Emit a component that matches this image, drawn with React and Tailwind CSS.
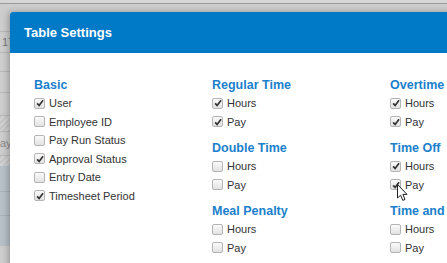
const groups = [
  [{ title: "Basic", items: [["User", true], ["Employee ID", false], ["Pay Run Status", false], ["Approval Status", true], ["Entry Date", false], ["Timesheet Period", true]] }],
  [
    { title: "Regular Time", items: [["Hours", true], ["Pay", true]] },
    { title: "Double Time", items: [["Hours", false], ["Pay", false]] },
    { title: "Meal Penalty", items: [["Hours", false], ["Pay", false]] },
  ],
  [
    { title: "Overtime", items: [["Hours", true], ["Pay", true]] },
    { title: "Time Off", items: [["Hours", true], ["Pay", true]] },
    { title: "Time and a Half", items: [["Hours", false], ["Pay", false]] },
  ],
];

const Box = ({ checked }) => (
  <span className="flex h-[11px] w-[11px] shrink-0 items-center justify-center rounded-[2px] border border-[#b4b4b4] bg-gradient-to-b from-[#fafafa] to-[#e2e2e2]">
    {checked ? (
      <svg className="h-[8px] w-[8px]" viewBox="0 0 10 10">
        <path d="M1.4 5.4 L3.9 8 L8.8 1.6" fill="none" stroke="#333" strokeWidth="2.1" />
      </svg>
    ) : null}
  </span>
);

export default function App() {
  return (
    <div className="relative h-[263px] w-[447px] overflow-hidden bg-[#cdcdcd] font-['Liberation_Sans',Arial,sans-serif]">
      <div className="flex flex-col">
        <div className="h-[4px] border-b border-[#9a9a9a] bg-[#d6d6d6]" />
        <div className="h-[28px] border-b border-[#b8b8b8]" />
        <div className="flex h-[21px] items-center border-b border-[#b8b8b8] pl-[2px] text-[11px] text-[#777]">17</div>
        <div className="h-[19px] border-b border-[#b8b8b8]" />
        <div className="h-[21px] border-b border-[#b8b8b8]" />
        <div className="h-[23px] border-b border-[#b8b8b8]" />
        <div className="h-[16px] border-b border-[#b8b8b8] bg-[repeating-linear-gradient(135deg,#c6c6c6_0_2px,#d2d2d2_2px_4px)]" />
        <div className="flex h-[24px] items-center border-b border-[#b8b8b8] text-[11px] text-[#888]">ay</div>
        <div className="h-[10px] bg-[repeating-linear-gradient(135deg,#c6c6c6_0_2px,#d2d2d2_2px_4px)]" />
        <div className="h-[26px] border-b border-[#a9b2ba] bg-[#b8c0c8]" />
        <div className="h-[24px] border-b border-[#a9b2ba] bg-[#b8c0c8]" />
        <div className="h-[30px] bg-[#b8c0c8]" />
      </div>

      <div className="absolute left-[10px] top-[12px] h-[300px] w-[480px] rounded-tl-[3px] bg-white shadow-[-2px_0_6px_rgba(0,0,0,0.25)]">
        <div className="flex h-[41px] items-center rounded-tl-[3px] bg-[#0079c7] pl-[14px] text-[13px] font-bold text-white">
          Table Settings
        </div>
        <div className="flex pl-[24px] pt-[23px]">
          {groups.map((col, ci) => (
            <div key={ci} className="flex w-[178px] shrink-0 flex-col gap-[8px]">
              {col.map((g) => (
                <div key={g.title} className="flex flex-col">
                  <div className="flex h-[18px] items-center whitespace-nowrap text-[12.5px] font-bold text-[#1b7fcc]">{g.title}</div>
                  {g.items.map(([label, checked]) => (
                    <div key={label} className="flex h-[18.5px] items-center gap-[4px] whitespace-nowrap text-[11px] text-[#333]">
                      <Box checked={checked} />
                      <span>{label}</span>
                    </div>
                  ))}
                </div>
              ))}
            </div>
          ))}
        </div>
      </div>

      <svg className="absolute left-[397px] top-[184px] h-[18px] w-[12px]" viewBox="0 0 12 18">
        <path d="M0.5 0.5 L0.5 14 L3.6 11.2 L5.8 16.4 L8 15.4 L5.9 10.4 L10 10.4 Z" fill="white" stroke="#222" strokeWidth="1" strokeLinejoin="round" />
      </svg>
    </div>
  );
}
